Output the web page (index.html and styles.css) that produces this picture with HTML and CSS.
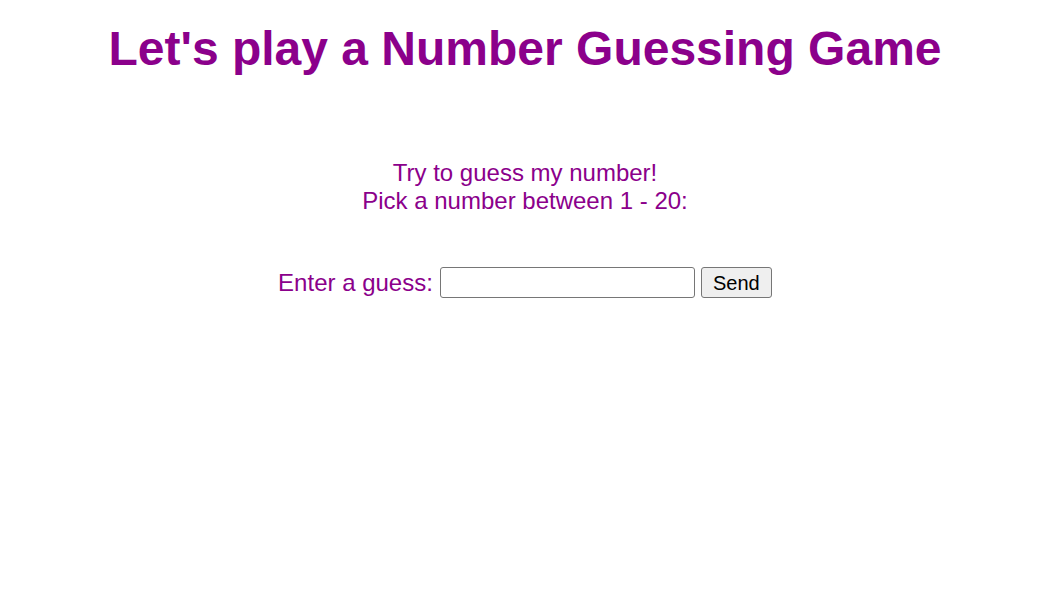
FILE: index.html
```html
<!DOCTYPE html>
<html>
<head>
<meta charset="utf-8">
<link rel="stylesheet" href="styles.css">
</head>
<body>
<h1 class="title">Let's play a Number Guessing Game</h1>
<div class="intro">
  <p>Try to guess my number!<br>Pick a number between 1 - 20:</p>
</div>
<form class="guess-form">
  <label class="guess-label" for="guess">Enter a guess:</label>
  <input class="guess-input" id="guess" type="text">
  <button class="guess-btn" type="button">Send</button>
</form>
</body>
</html>
```
FILE: styles.css
```css
body {
  margin: 8px;
  font-family: "Liberation Sans", Arial, sans-serif;
  color: #8b008b;
  background: #fff;
  text-align: center;
}
.title {
  font-size: 48px;
  font-weight: bold;
  margin: 13px 0 16px;
  padding-left: 2px;
}
.intro {
  margin-top: 83px;
  font-size: 24px;
  padding-left: 2px;
}
.intro p {
  margin: 0;
  line-height: 28px;
}
.guess-form {
  margin-top: 52px;
  font-size: 24px;
  display: flex;
  justify-content: center;
  align-items: center;
  gap: 6px;
  padding-left: 2px;
}
.guess-label {
  margin-right: 1px;
}
.guess-input {
  width: 255px;
  height: 31px;
  box-sizing: border-box;
  border: 1px solid #767676;
  border-radius: 3px;
  font-size: 20px;
}
.guess-btn {
  width: 71px;
  height: 31px;
  box-sizing: border-box;
  font-family: "Liberation Sans", Arial, sans-serif;
  font-size: 20px;
  color: #000;
  background: #efefef;
  border: 1px solid #767676;
  border-radius: 3px;
  padding: 1px 0 0;
}
```
